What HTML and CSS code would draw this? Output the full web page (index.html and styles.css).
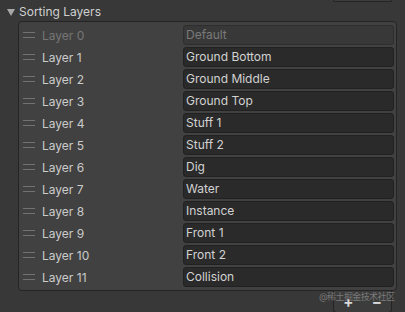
FILE: index.html
```html
<!DOCTYPE html>
<html lang="en">

<head>
    <meta charset="UTF-8">
    <meta name="viewport" content="width=device-width, initial-scale=1.0">
    <title>Sorting Layers</title>
    <link rel="stylesheet" href="styles.css">
</head>

<body>
    <div class="inspector">
        <div class="prev-footer"></div>

        <div class="section-header">
            <span class="foldout"></span>
            <span class="section-title">Sorting Layers</span>
        </div>

        <div class="layer-list">
            <div class="layer-row disabled">
                <span class="handle"></span>
                <span class="layer-label">Layer 0</span>
                <span class="layer-field">Default</span>
            </div>
            <div class="layer-row">
                <span class="handle"></span>
                <span class="layer-label">Layer 1</span>
                <span class="layer-field">Ground Bottom</span>
            </div>
            <div class="layer-row">
                <span class="handle"></span>
                <span class="layer-label">Layer 2</span>
                <span class="layer-field">Ground Middle</span>
            </div>
            <div class="layer-row">
                <span class="handle"></span>
                <span class="layer-label">Layer 3</span>
                <span class="layer-field">Ground Top</span>
            </div>
            <div class="layer-row">
                <span class="handle"></span>
                <span class="layer-label">Layer 4</span>
                <span class="layer-field">Stuff 1</span>
            </div>
            <div class="layer-row">
                <span class="handle"></span>
                <span class="layer-label">Layer 5</span>
                <span class="layer-field">Stuff 2</span>
            </div>
            <div class="layer-row">
                <span class="handle"></span>
                <span class="layer-label">Layer 6</span>
                <span class="layer-field">Dig</span>
            </div>
            <div class="layer-row">
                <span class="handle"></span>
                <span class="layer-label">Layer 7</span>
                <span class="layer-field">Water</span>
            </div>
            <div class="layer-row">
                <span class="handle"></span>
                <span class="layer-label">Layer 8</span>
                <span class="layer-field">Instance</span>
            </div>
            <div class="layer-row">
                <span class="handle"></span>
                <span class="layer-label">Layer 9</span>
                <span class="layer-field">Front 1</span>
            </div>
            <div class="layer-row">
                <span class="handle"></span>
                <span class="layer-label">Layer 10</span>
                <span class="layer-field">Front 2</span>
            </div>
            <div class="layer-row">
                <span class="handle"></span>
                <span class="layer-label">Layer 11</span>
                <span class="layer-field">Collision</span>
            </div>
        </div>

        <div class="list-footer">
            <span class="footer-btn">+</span>
            <span class="footer-btn">&minus;</span>
            <span class="watermark">@稀土掘金技术社区</span>
        </div>
    </div>
</body>

</html>
```

FILE: styles.css
```css
body {
    margin: 0;
    background-color: #383838;
    font-family: Inter, 'Noto Sans', 'Noto Sans CJK SC', sans-serif;
    font-size: 12px;
    color: #c8c8c8;
    overflow: hidden;
}

.inspector {
    width: 405px;
    height: 312px;
}

/* bottom edge of the footer belonging to the list above */
.prev-footer {
    margin-left: 333px;
    width: 57px;
    height: 1px;
    border: 1px solid #242424;
    border-top: none;
    border-radius: 0 0 3px 3px;
    background-color: #3c3c3c;
}

.section-header {
    display: flex;
    align-items: center;
    height: 19px;
    padding-left: 7px;
}

.foldout {
    width: 0;
    height: 0;
    border-left: 4px solid transparent;
    border-right: 4px solid transparent;
    border-top: 7px solid #a8a8a8;
    margin-right: 4px;
    margin-top: 1px;
}

.section-title {
    color: #d0d0d0;
}

.layer-list {
    margin-left: 18px;
    width: 377px;
    padding: 2px 0 2px;
    background-color: #414141;
    border: 1px solid #242424;
    border-radius: 4px;
}

.layer-row {
    display: flex;
    align-items: center;
    height: 22px;
}

.handle {
    width: 12px;
    height: 4px;
    margin-left: 4px;
    margin-right: 7px;
    border-top: 1px solid #727272;
    border-bottom: 1px solid #727272;
}

.layer-label {
    width: 141px;
    color: #cbcbcb;
}

.layer-field {
    flex: 1;
    height: 18px;
    line-height: 18px;
    margin-right: 2px;
    padding-left: 2px;
    background-color: #2a2a2a;
    border: 1px solid #212121;
    border-radius: 3px;
    color: #d2d2d2;
}

.layer-row.disabled .layer-label {
    color: #767676;
}

.layer-row.disabled .layer-field {
    background-color: #383838;
    border-color: #2e2e2e;
    color: #7a7a7a;
}

.list-footer {
    position: relative;
    display: flex;
    justify-content: space-around;
    align-items: center;
    margin-left: 333px;
    width: 57px;
    height: 21px;
    border: 1px solid #242424;
    border-top: none;
    border-radius: 0 0 4px 4px;
    background-color: #3c3c3c;
}

.footer-btn {
    color: #d8d8d8;
    font-size: 15px;
    font-weight: bold;
    line-height: 1;
}

.watermark {
    position: absolute;
    left: -15px;
    top: 0;
    font-size: 9px;
    letter-spacing: -0.6px;
    line-height: 12px;
    color: rgba(200, 200, 200, 0.45);
    white-space: nowrap;
}
```
